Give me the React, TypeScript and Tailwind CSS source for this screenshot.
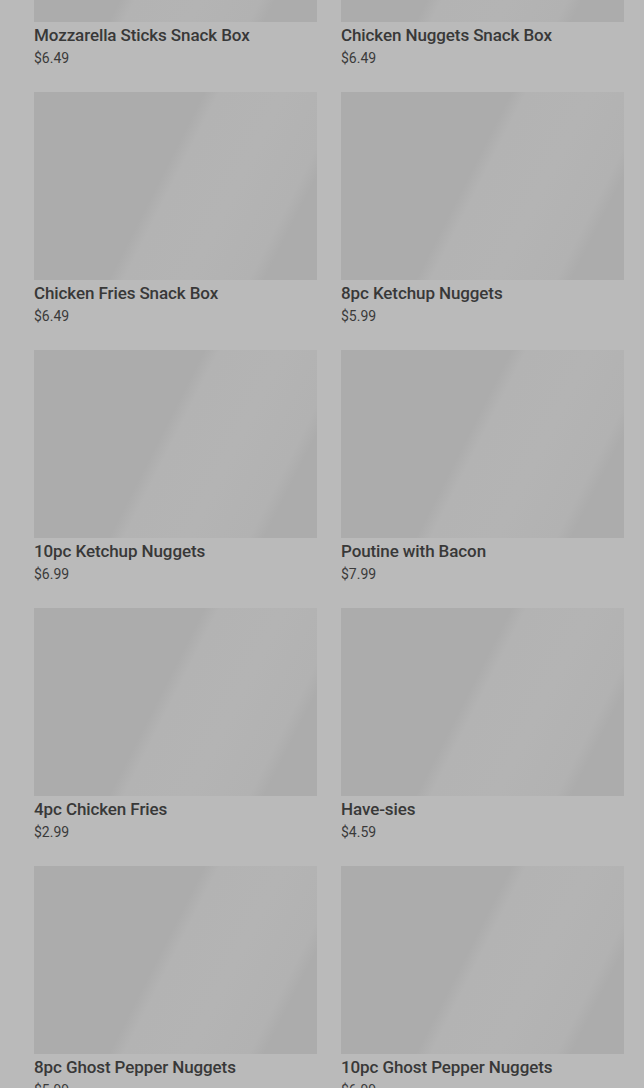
const items = [
  { name: 'Mozzarella Sticks Snack Box', price: '$6.49' },
  { name: 'Chicken Nuggets Snack Box', price: '$6.49' },
  { name: 'Chicken Fries Snack Box', price: '$6.49' },
  { name: '8pc Ketchup Nuggets', price: '$5.99' },
  { name: '10pc Ketchup Nuggets', price: '$6.99' },
  { name: 'Poutine with Bacon', price: '$7.99' },
  { name: '4pc Chicken Fries', price: '$2.99' },
  { name: 'Have-sies', price: '$4.59' },
  { name: '8pc Ghost Pepper Nuggets', price: '$5.99' },
  { name: '10pc Ghost Pepper Nuggets', price: '$6.99' },
]

function MenuTile({ name, price }: { name: string; price: string }) {
  return (
    <div className="flex flex-col">
      <div className="h-[188px] w-full bg-[linear-gradient(117deg,#acacac_0%,#acacac_45%,#b3b3b3_49%,#b4b4b4_66%,#b2b2b2_82%,#acacac_86%,#acacac_100%)]" />
      <div className="mt-px text-[17px] leading-6 font-medium tracking-[-0.1px] text-[#383838]">{name}</div>
      <div className="mt-px text-[14px] leading-5 text-[#3a3a3a]">{price}</div>
    </div>
  )
}

export default function App() {
  return (
    <div className="h-[1088px] overflow-hidden bg-[#bababa]" style={{ fontFamily: 'Roboto, "Liberation Sans", sans-serif' }}>
      <div className="mt-[-166px] grid grid-cols-2 gap-x-6 gap-y-6 pl-[34px] pr-5">
        {items.map((item) => (
          <MenuTile key={item.name} name={item.name} price={item.price} />
        ))}
      </div>
    </div>
  )
}
